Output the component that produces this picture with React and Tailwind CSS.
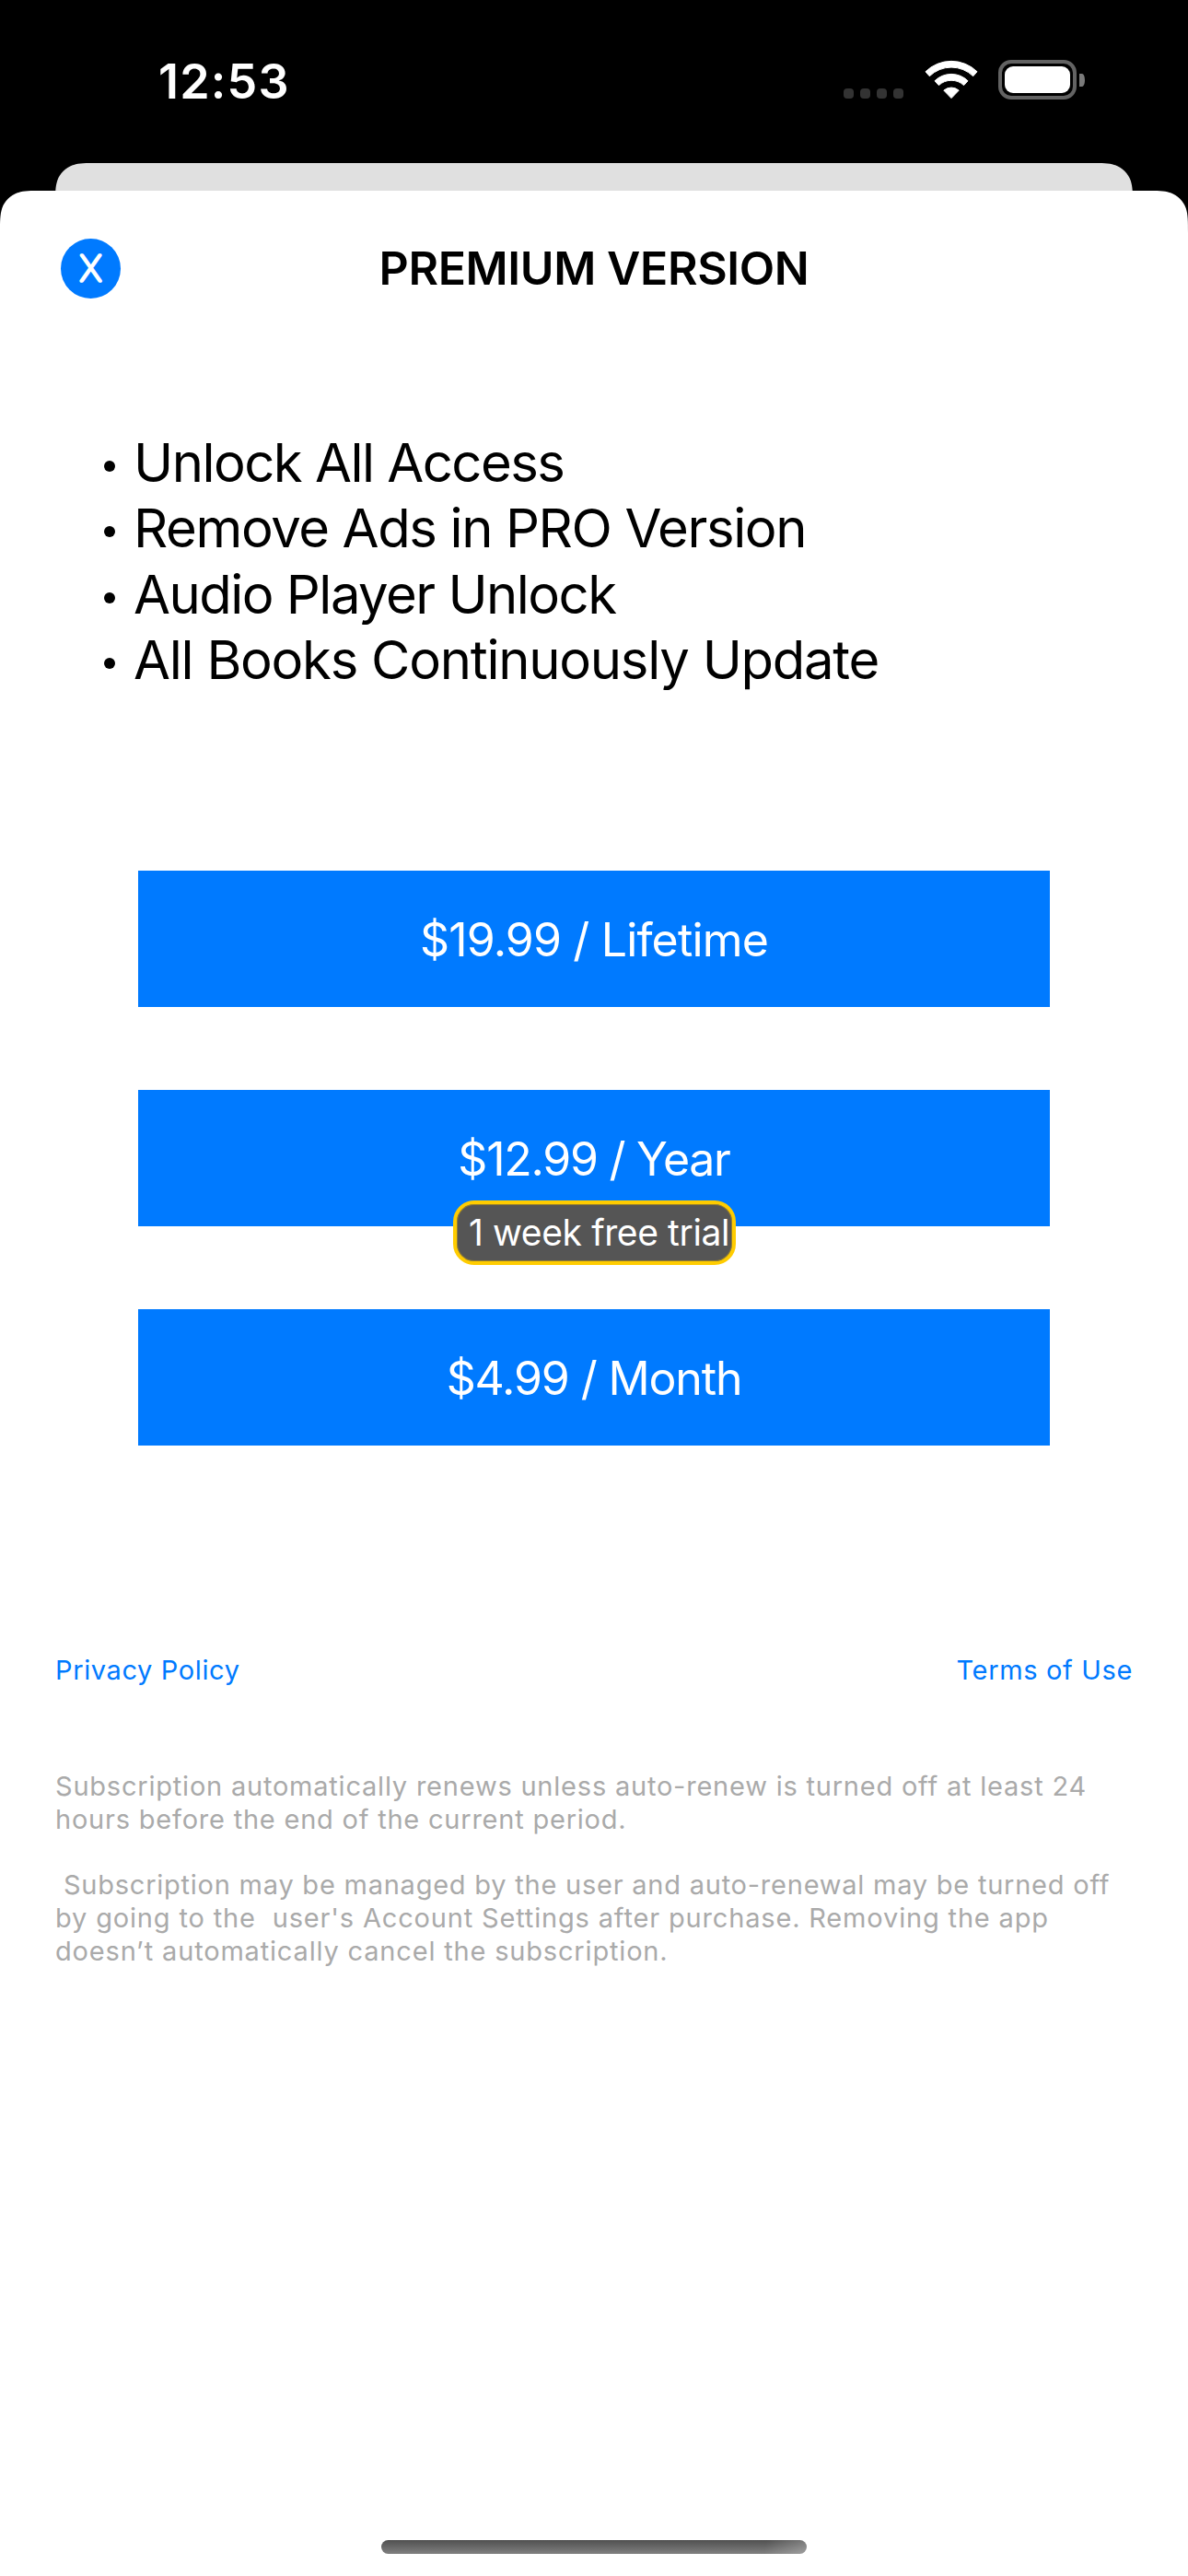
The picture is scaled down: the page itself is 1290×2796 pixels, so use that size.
const features = [
  { text: 'Unlock All Access', tracking: 'tracking-[-1.52px]' },
  { text: 'Remove Ads in PRO Version', tracking: 'tracking-[-1.39px]' },
  { text: 'Audio Player Unlock', tracking: 'tracking-[-1.52px]' },
  { text: 'All Books Continuously Update', tracking: 'tracking-[-1.26px]' },
];

const plans = [
  { text: '$19.99 / Lifetime', tracking: 'tracking-[-0.85px]' },
  { text: '$12.99 / Year', tracking: 'tracking-[-1.27px]', badge: '1 week free trial' },
  { text: '$4.99 / Month', tracking: 'tracking-[-1.14px]' },
];

const legal = [
  { text: 'Subscription automatically renews unless auto-renew is turned off at least 24', tracking: 'tracking-[0.784px]' },
  { text: 'hours before the end of the current period.', tracking: 'tracking-[0.78px]' },
  { text: '\u00a0', tracking: 'tracking-normal' },
  { text: '\u00a0Subscription may be managed by the user and auto-renewal may be turned off', tracking: 'tracking-[0.765px]' },
  { text: "by going to the\u00a0 user's Account Settings after purchase. Removing the app", tracking: 'tracking-[0.832px]' },
  { text: 'doesn’t automatically cancel the subscription.', tracking: 'tracking-[0.819px]' },
];

/* Black wedge that rounds a panel's top corner with a continuous curve. */
function Corner({ side }) {
  return (
    <svg
      className={side === 'left' ? 'absolute left-0 top-0' : 'absolute right-0 top-0 -scale-x-100'}
      width="46"
      height="46"
      viewBox="0 0 46 46"
      aria-hidden="true"
    >
      <path
        d="M0 0H45.9C32.65 0 26.05 0 20.1 1.96L18.9 2.25C11.2 5.07 5.07 11.2 2.25 18.9C0 26.05 0 32.65 0 45.9Z"
        fill="#000"
      />
    </svg>
  );
}

function WifiIcon() {
  return (
    <svg width="58" height="43" viewBox="0 0 58 43" fill="#fff" stroke="#fff" strokeWidth="1" strokeLinejoin="round" aria-hidden="true">
      <path d="M1 12.8A40 40 0 0 1 57 12.8L52.7 17.7A34 34 0 0 0 5.3 17.7Z" />
      <path d="M11 22.8A25.6 25.6 0 0 1 47 22.8L42.6 27.6A20 20 0 0 0 15.4 27.6Z" />
      <path d="M20.8 33.1A12.5 12.5 0 0 1 37.2 33.1L29 41.6Z" />
    </svg>
  );
}

function StatusBar() {
  return (
    <div className="flex h-[177px] items-start justify-between pl-[172px] pr-[112px]">
      <span className="mt-[53px] text-[52px] font-semibold leading-[72px] tracking-[1.18px] text-white">12:53</span>
      <div className="mt-[65px] flex h-[43px] items-start">
        <div className="mt-[31px] flex gap-[7px]">
          {[0, 1, 2, 3].map((i) => (
            <span key={i} className="size-[11px] rounded-[4px] bg-[#333333]" />
          ))}
        </div>
        <div className="ml-[22.5px]">
          <WifiIcon />
        </div>
        <div className="ml-[22.5px] flex items-center">
          <div className="h-[43px] w-[85px] rounded-[14px] border-4 border-[#636363] p-[3px]">
            <div className="h-[29px] w-[71px] rounded-[9px] bg-white" />
          </div>
          <span className="ml-[3px] h-[14px] w-[6px] rounded-r-[100%] bg-[#7a7a7a]" />
        </div>
      </div>
    </div>
  );
}

function Plan({ text, tracking, badge }) {
  return (
    <div className="relative flex h-[148px] items-center justify-center bg-[#007aff] pt-[2px] text-[50px] text-white">
      <span className={tracking}>{text}</span>
      {badge && (
        <span className="absolute left-[342px] top-[120px] flex h-[70px] w-[307px] items-center whitespace-nowrap rounded-[23px] border-4 border-[#ffcc00] bg-[#555555] pl-[13px] text-[39px] tracking-[-0.39px] shadow-[inset_0_0_0_1px_#967f30]">
          {badge}
        </span>
      )}
    </div>
  );
}

export default function App() {
  return (
    <div className="flex h-[2796px] w-[1290px] flex-col overflow-hidden bg-black font-['Inter',sans-serif] text-black">
      <StatusBar />
      <div className="relative mx-[60px] h-[30px] shrink-0 overflow-hidden bg-[#e0e0e0]">
        <Corner side="left" />
        <Corner side="right" />
      </div>
      <main className="relative flex flex-1 flex-col bg-white">
        <Corner side="left" />
        <Corner side="right" />

        <header className="mt-[52px] grid h-[65px] grid-cols-[1fr_auto_1fr] items-center px-[66px]">
          <button className="size-[65px] rounded-full bg-[#007aff]" aria-label="Close">
            <svg width="65" height="65" viewBox="0 0 65 65" aria-hidden="true">
              <text
                x="32.5"
                y="46.4"
                textAnchor="middle"
                className="font-['Inter'] text-[38px] font-thin"
                fill="#fff"
                stroke="#fff"
                strokeWidth="3.4"
                strokeLinejoin="round"
              >
                X
              </text>
            </svg>
          </button>
          <h1 className="-mt-[2px] text-[50px] font-semibold leading-[60px] tracking-[-0.384px]">PREMIUM VERSION</h1>
        </header>

        <ul className="mt-[143px] pl-[113px]">
          {features.map((f) => (
            <li key={f.text} className="flex items-center gap-5 text-[58px] leading-[71.25px]">
              <span className="mt-[7px] size-3 rounded-full bg-black" />
              <span className={f.tracking}>{f.text}</span>
            </li>
          ))}
        </ul>

        <section className="mt-[193px] flex flex-col gap-[90px] px-[150px]">
          {plans.map((p) => (
            <Plan key={p.text} {...p} />
          ))}
        </section>

        <nav className="mt-[226px] flex justify-between px-[60px] text-[29px] leading-[36px] text-[#007aff]">
          <a className="tracking-[0.62px]">Privacy Policy</a>
          <a className="tracking-[0.65px]">Terms of Use</a>
        </nav>

        <div className="mt-[90px] whitespace-nowrap px-[60px] text-[29px] leading-[35.8px] text-[#aaaaaa]">
          {legal.map((l, i) => (
            <p key={i} className={l.tracking}>
              {l.text}
            </p>
          ))}
        </div>

        <div className="mb-[24px] mt-auto h-[15px] w-[462px] self-center rounded-full bg-[linear-gradient(100deg,transparent_90%,rgba(255,255,255,0.25)_100%),linear-gradient(#505050,#808080)]" />
      </main>
    </div>
  );
}
